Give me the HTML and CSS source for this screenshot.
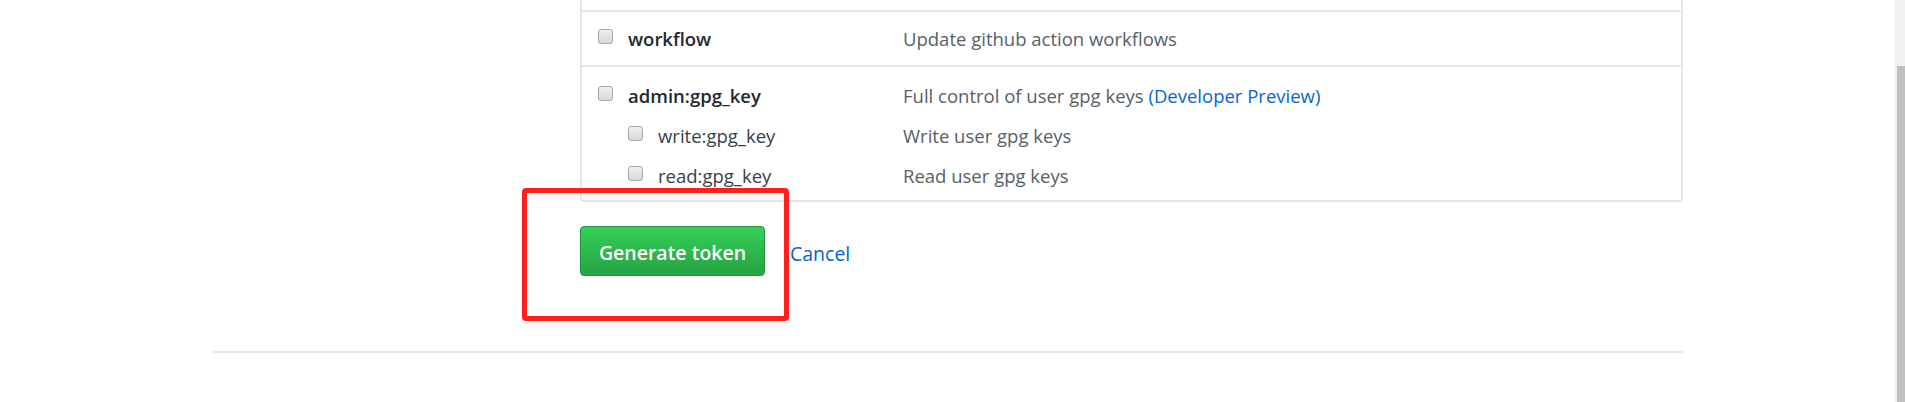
FILE: index.html
```html
<!DOCTYPE html>
<html lang="en">
<head>
<meta charset="utf-8">
<title>New personal access token</title>
<link rel="stylesheet" href="styles.css">
</head>
<body>
<div class="page">
  <div class="viewport">
    <div class="container">
      <div class="layout">
        <div class="sidebar"></div>
        <div class="main">
          <div class="scopes">
            <div class="group">
              <div class="line">
                <label class="name parent"><input type="checkbox" class="cb"><span>workflow</span></label>
                <span class="desc">Update github action workflows</span>
              </div>
            </div>
            <div class="group">
              <div class="line">
                <label class="name parent"><input type="checkbox" class="cb"><span>admin:gpg_key</span></label>
                <span class="desc">Full control of user gpg keys <a href="#" class="link">(Developer Preview)</a></span>
              </div>
              <div class="line sub">
                <label class="name child"><input type="checkbox" class="cb"><span>write:gpg_key</span></label>
                <span class="desc">Write user gpg keys</span>
              </div>
              <div class="line sub">
                <label class="name child"><input type="checkbox" class="cb"><span>read:gpg_key</span></label>
                <span class="desc">Read user gpg keys</span>
              </div>
            </div>
          </div>
          <div class="actions">
            <button type="button" class="btn-primary">Generate token</button>
            <a href="#" class="cancel">Cancel</a>
            <div class="highlight"></div>
          </div>
        </div>
      </div>
      <hr class="rule">
    </div>
  </div>
  <div class="scrollbar"><div class="thumb"></div></div>
</div>
</body>
</html>
```

FILE: styles.css
```css
html, body {
  margin: 0;
  padding: 0;
  background: #ffffff;
  height: 100%;
}

body {
  font-family: "Open Sans", "Noto Sans", sans-serif;
  font-size: 18.5px;
  color: #24292e;
  overflow: hidden;
}

.page {
  display: flex;
  height: 402px;
}

.viewport {
  flex: 1;
  overflow: hidden;
}

.container {
  margin-left: 213px;
  width: 1470px;
}

.layout {
  display: flex;
}

.sidebar {
  width: 367px;
  flex: none;
}

.main {
  flex: 1;
}

.scopes {
  border: 2px solid #e4e6ea;
  border-top: none;
  border-radius: 0 0 4px 4px;
  padding-top: 10px;
}

.group {
  border-top: 2px solid #e4e6ea;
  padding: 14px 16px 13px;
}

.group + .group {
  padding-top: 16px;
  padding-bottom: 11px;
}

.line {
  display: grid;
  grid-template-columns: 305px 1fr;
  line-height: 26px;
}

.line.sub {
  margin-top: 14px;
}

.name {
  display: flex;
  align-items: flex-start;
  gap: 15px;
}

.name.parent {
  font-weight: 600;
}

.name.child {
  padding-left: 30px;
  color: #3a4047;
}

.cb {
  appearance: none;
  -webkit-appearance: none;
  margin: 3px 0 0;
  width: 15px;
  height: 15px;
  border: 1px solid #a8a8a8;
  border-radius: 3px;
  background: linear-gradient(#eeeeee, #d9d9d9);
  flex: none;
}

.desc {
  color: #586069;
}

.link {
  color: #0366d6;
  text-decoration: none;
}

.actions {
  position: relative;
  display: flex;
  align-items: center;
  gap: 25px;
  margin-top: 24px;
}

.btn-primary {
  width: 185px;
  height: 50px;
  font-family: inherit;
  font-size: 19.5px;
  font-weight: 600;
  color: #ffffff;
  background: linear-gradient(#34d058, #28a745 90%);
  border: 1px solid #23923d;
  border-radius: 4px;
  padding: 3px 0 0;
}

.cancel {
  color: #0366d6;
  text-decoration: none;
  font-size: 19.5px;
  padding-top: 4px;
}

.highlight {
  position: absolute;
  left: -58px;
  top: -38px;
  width: 257px;
  height: 123px;
  border: 5px solid #ff1f1f;
  border-radius: 4px;
  pointer-events: none;
}

.rule {
  margin: 75px 0 0;
  border: none;
  height: 2px;
  background: #e6e6ed;
}

.scrollbar {
  width: 10px;
  flex: none;
  background: #f1f1f1;
  display: flex;
  flex-direction: column;
  align-items: flex-end;
}

.thumb {
  margin-top: 66px;
  width: 8px;
  flex: 1;
  background: #c1c1c1;
}
```
